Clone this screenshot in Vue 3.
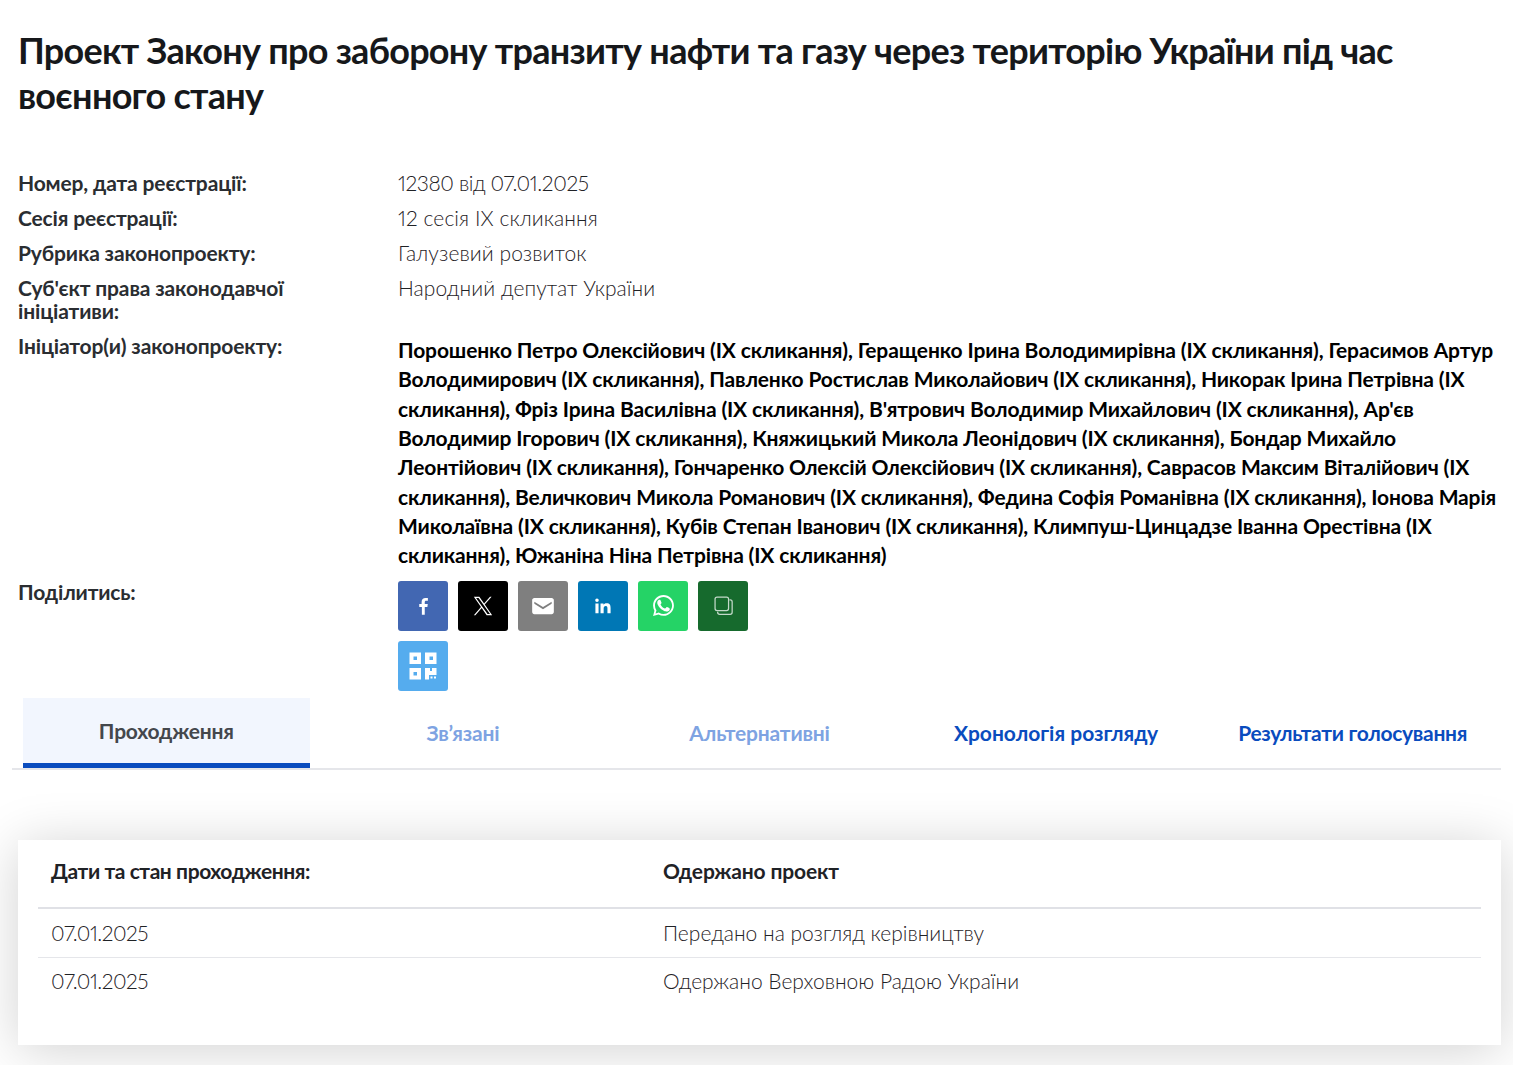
<template>
  <div class="page">
    <h1 class="title">Проект Закону про заборону транзиту нафти та газу через територію України під час воєнного стану</h1>

    <div class="info">
      <div class="row" v-for="r in rows" :key="r.label">
        <div class="label">{{ r.label }}</div>
        <div class="value" :class="r.cls">{{ r.value }}</div>
      </div>
      <div class="row row-init">
        <div class="label">Ініціатор(и) законопроекту:</div>
        <div class="value initiators">{{ initiators }}</div>
      </div>
      <div class="row share-row">
        <div class="label">Поділитись:</div>
        <div class="share">
          <a class="btn fb"><svg width="30" height="30" viewBox="0 0 24 24"><path fill="#fff" d="M13.4 19v-6.2h2.1l.3-2.4h-2.4V8.9c0-.7.2-1.2 1.2-1.2h1.3V5.6c-.2 0-1-.1-1.9-.1-1.9 0-3.1 1.1-3.1 3.2v1.7H9v2.4h2.1V19z"/></svg></a>
          <a class="btn x"><svg width="20" height="20" viewBox="0 0 24 24"><path fill="#fff" d="M14.1 10.3 22.3 1h-1.9l-7.1 8.1L7.6 1H1l8.6 12.3L1 23h1.9l7.5-8.6 6 8.6H23zm-2.7 3-.9-1.2L3.700 2.400h3l5.600 7.800.9 1.200 7.200 10.200h-3z"/></svg></a>
          <a class="btn mail"><svg width="26" height="26" viewBox="0 0 24 24"><path fill="#fff" d="M4 4.500h16c1.100 0 2 .9 2 2v11c0 1.100-.9 2-2 2H4c-1.100 0-2-.9-2-2v-11c0-1.100.9-2 2-2zm16 3.600L12 13 4 8.100V10l8 5 8-5z"/></svg></a>
          <a class="btn in"><svg width="26" height="26" viewBox="0 0 24 24"><path fill="#fff" d="M5 9.600h2.900v9H5zM6.450 5a1.650 1.650 0 1 1 0 3.300 1.650 1.650 0 0 1 0-3.300zM9.700 9.600h2.750v1.250c.45-.8 1.450-1.450 2.900-1.450 3 0 3.650 1.850 3.650 4.400v4.800h-2.900v-4.250c0-1.100-.05-2.450-1.500-2.450-1.500 0-2 1.150-2 2.350v4.350H9.700z"/></svg></a>
          <a class="btn wa"><svg width="25" height="25" viewBox="0 0 24 24"><path fill="#fff" d="M17.500 14.400c-.3-.15-1.750-.85-2-.95-.3-.1-.5-.15-.7.15-.2.3-.75.95-.95 1.150-.15.2-.35.2-.65.05-.3-.15-1.250-.45-2.350-1.450-.9-.8-1.500-1.750-1.650-2.050-.2-.3 0-.45.1-.6l.45-.5c.15-.2.2-.3.3-.5.1-.2.05-.35 0-.5-.1-.15-.7-1.600-.95-2.200-.25-.6-.5-.5-.65-.5h-.6c-.2 0-.55.05-.8.35-.3.3-1.050 1-1.050 2.500s1.050 2.900 1.200 3.100c.15.2 2.100 3.200 5.100 4.500.7.300 1.250.5 1.700.6.700.25 1.350.2 1.850.15.55-.1 1.750-.7 2-1.400.25-.7.25-1.250.15-1.400-.05-.1-.25-.2-.55-.35z"/><path fill="#fff" d="M12 2C6.500 2 2 6.500 2 12c0 1.750.45 3.450 1.300 4.950L2 22l5.200-1.350A10 10 0 0 0 12 21.900h.01C17.500 21.900 22 17.450 22 11.950 22 6.400 17.500 2 12 2zm0 18.150c-1.500 0-2.950-.4-4.200-1.150l-.3-.2-3.100.8.85-3-.2-.3A8.200 8.200 0 0 1 3.800 12c0-4.550 3.700-8.250 8.250-8.250 4.500 0 8.200 3.700 8.200 8.200 0 4.550-3.700 8.200-8.250 8.200z"/></svg></a>
          <a class="btn copy"><svg width="27" height="27" viewBox="0 0 24 24" fill="none" stroke="#fff" stroke-opacity=".75" stroke-width="1.100"><rect x="4.500" y="4.500" width="12" height="12" rx="1.800"/><path d="M6.800 17.500v.6c0 1 .8 1.800 1.800 1.800h9.300c1 0 1.800-.8 1.800-1.800V8.800c0-1-.8-1.800-1.800-1.800h-.6"/></svg></a>
          <a class="btn qr"><svg width="30" height="30" viewBox="0 0 30 30"><path fill="#fff" fill-rule="evenodd" d="M1.500 1.500H13V13H1.500zm4 4v3.500H9V5.500zM17 1.500h11.500V13H17zm4.500 4v3.500H25V5.500zM1.500 17H13v11.500H1.500zm4 4v3.500H9V21zM17 17h5v3h2v-3h4.500v7H21v4.500h-4z"/><path fill="#fff" d="M22.500 25.500h2v2h-2zm3.500 0h2v2h-2z"/></svg></a>
        </div>
      </div>
    </div>

    <div class="tabs">
      <div class="tab" v-for="t in tabs" :key="t.name" :class="t.cls">
        <span>{{ t.name }}</span>
      </div>
    </div>

    <div class="card">
      <div class="thead">
        <div class="c1">Дати та стан проходження:</div>
        <div class="c2">Одержано проект</div>
      </div>
      <div class="trow" v-for="s in stages" :key="s">
        <div class="c1 date">07.01.2025</div>
        <div class="c2">{{ s }}</div>
      </div>
    </div>
  </div>
</template>

<script setup>
const rows = [
  { label: 'Номер, дата реєстрації:', value: '12380 від 07.01.2025', cls: 'date' },
  { label: 'Сесія реєстрації:', value: '12 сесія IX скликання' },
  { label: 'Рубрика законопроекту:', value: 'Галузевий розвиток' },
  { label: "Суб'єкт права законодавчої ініціативи:", value: 'Народний депутат України' },
]

const initiators = "Порошенко Петро Олексійович (IX скликання), Геращенко Ірина Володимирівна (IX скликання), Герасимов Артур Володимирович (IX скликання), Павленко Ростислав Миколайович (IX скликання), Никорак Ірина Петрівна (IX скликання), Фріз Ірина Василівна (IX скликання), В'ятрович Володимир Михайлович (IX скликання), Ар'єв Володимир Ігорович (IX скликання), Княжицький Микола Леонідович (IX скликання), Бондар Михайло Леонтійович (IX скликання), Гончаренко Олексій Олексійович (IX скликання), Саврасов Максим Віталійович (IX скликання), Величкович Микола Романович (IX скликання), Федина Софія Романівна (IX скликання), Іонова Марія Миколаївна (IX скликання), Кубів Степан Іванович (IX скликання), Климпуш-Цинцадзе Іванна Орестівна (IX скликання), Южаніна Ніна Петрівна (IX скликання)"

const tabs = [
  { name: 'Проходження', cls: 'active' },
  { name: 'Зв’язані', cls: 'faded' },
  { name: 'Альтернативні', cls: 'faded' },
  { name: 'Хронологія розгляду', cls: 'wide' },
  { name: 'Результати голосування', cls: 'narrow' },
]

const stages = ['Передано на розгляд керівництву', 'Одержано Верховною Радою України']
</script>

<style>
html, body { background: #fff; }
</style>

<style scoped>
.page {
  font-family: Lato, "Noto Sans", sans-serif;
  font-variant-numeric: proportional-nums;
  color: #1f2226;
  height: 1065px;
  overflow: hidden;
  box-sizing: border-box;
  padding: 28px 12px 0 18px;
}
.title {
  margin: 0 0 53px;
  font-size: 36px;
  line-height: 45px;
  font-weight: 700;
  letter-spacing: -0.73px;
  color: #16181b;
}
.row {
  display: flex;
  font-size: 21px;
  line-height: 23px;
  margin-bottom: 12px;
}
.row-init { margin-bottom: 11px; }
.share-row .label { margin-top: -1px; }
.label {
  flex: 0 0 380px;
  box-sizing: border-box;
  padding-right: 90px;
  font-weight: 700;
  letter-spacing: -0.15px;
  color: #2a2d31;
}
.value {
  flex: 1;
  font-weight: 300;
  letter-spacing: 0.08px;
  color: #1f2226;
}
.value.date { letter-spacing: -0.4px; }
.initiators {
  font-weight: 700;
  color: #000;
  line-height: 29.33px;
  letter-spacing: -0.14px;
  margin-top: 1px;
}
.share {
  display: flex;
  flex-wrap: wrap;
  gap: 10px;
  width: 360px;
}
.btn {
  width: 50px;
  height: 50px;
  border-radius: 3px;
  display: flex;
  align-items: center;
  justify-content: center;
}
.fb { background: #4267b2; }
.x { background: #000; }
.mail { background: #7f7f7f; }
.in { background: #0077b5; }
.wa { background: #25d366; }
.copy { background: #166a2d; }
.qr { background: #55acee; }
.tabs {
  display: flex;
  margin: -5px 0 0 -6px;
  padding-left: 6px;
  border-bottom: 2px solid #e5e6ea;
}
.tab {
  flex: 1;
  height: 70px;
  margin: 0 5px;
  box-sizing: border-box;
  display: flex;
  align-items: center;
  justify-content: center;
  font-size: 21px;
  font-weight: 700;
  letter-spacing: -0.2px;
  color: #0a4cbe;
}
.tab.wide { letter-spacing: 0; }
.tab.narrow { letter-spacing: -0.3px; }
.tab.faded { color: #7ea3e2; }
.tab.active {
  background: #f2f6fe;
  color: #44474c;
  border-bottom: 5px solid #0a4cbe;
}
.card {
  margin-top: 70px;
  height: 205px;
  background: #fff;
  box-shadow: 0 5px 50px rgba(0, 0, 0, 0.18);
  padding: 0 20px;
}
.thead, .trow {
  display: flex;
  box-sizing: border-box;
  padding-left: 13px;
  font-size: 21px;
}
.thead {
  height: 69px;
  align-items: center;
  padding-bottom: 5px;
  font-weight: 700;
  letter-spacing: -0.15px;
  border-bottom: 2px solid #e0e1e6;
}
.thead .c1 { letter-spacing: -0.42px; }
.trow {
  height: 49px;
  align-items: center;
  font-weight: 300;
  color: #1f2226;
  border-bottom: 1px solid #e5e6ea;
}
.trow:last-child { border-bottom: 0; padding-bottom: 3px; }
.c1 { flex: 0 0 612px; }
.c1.date { letter-spacing: -0.5px; }
</style>
